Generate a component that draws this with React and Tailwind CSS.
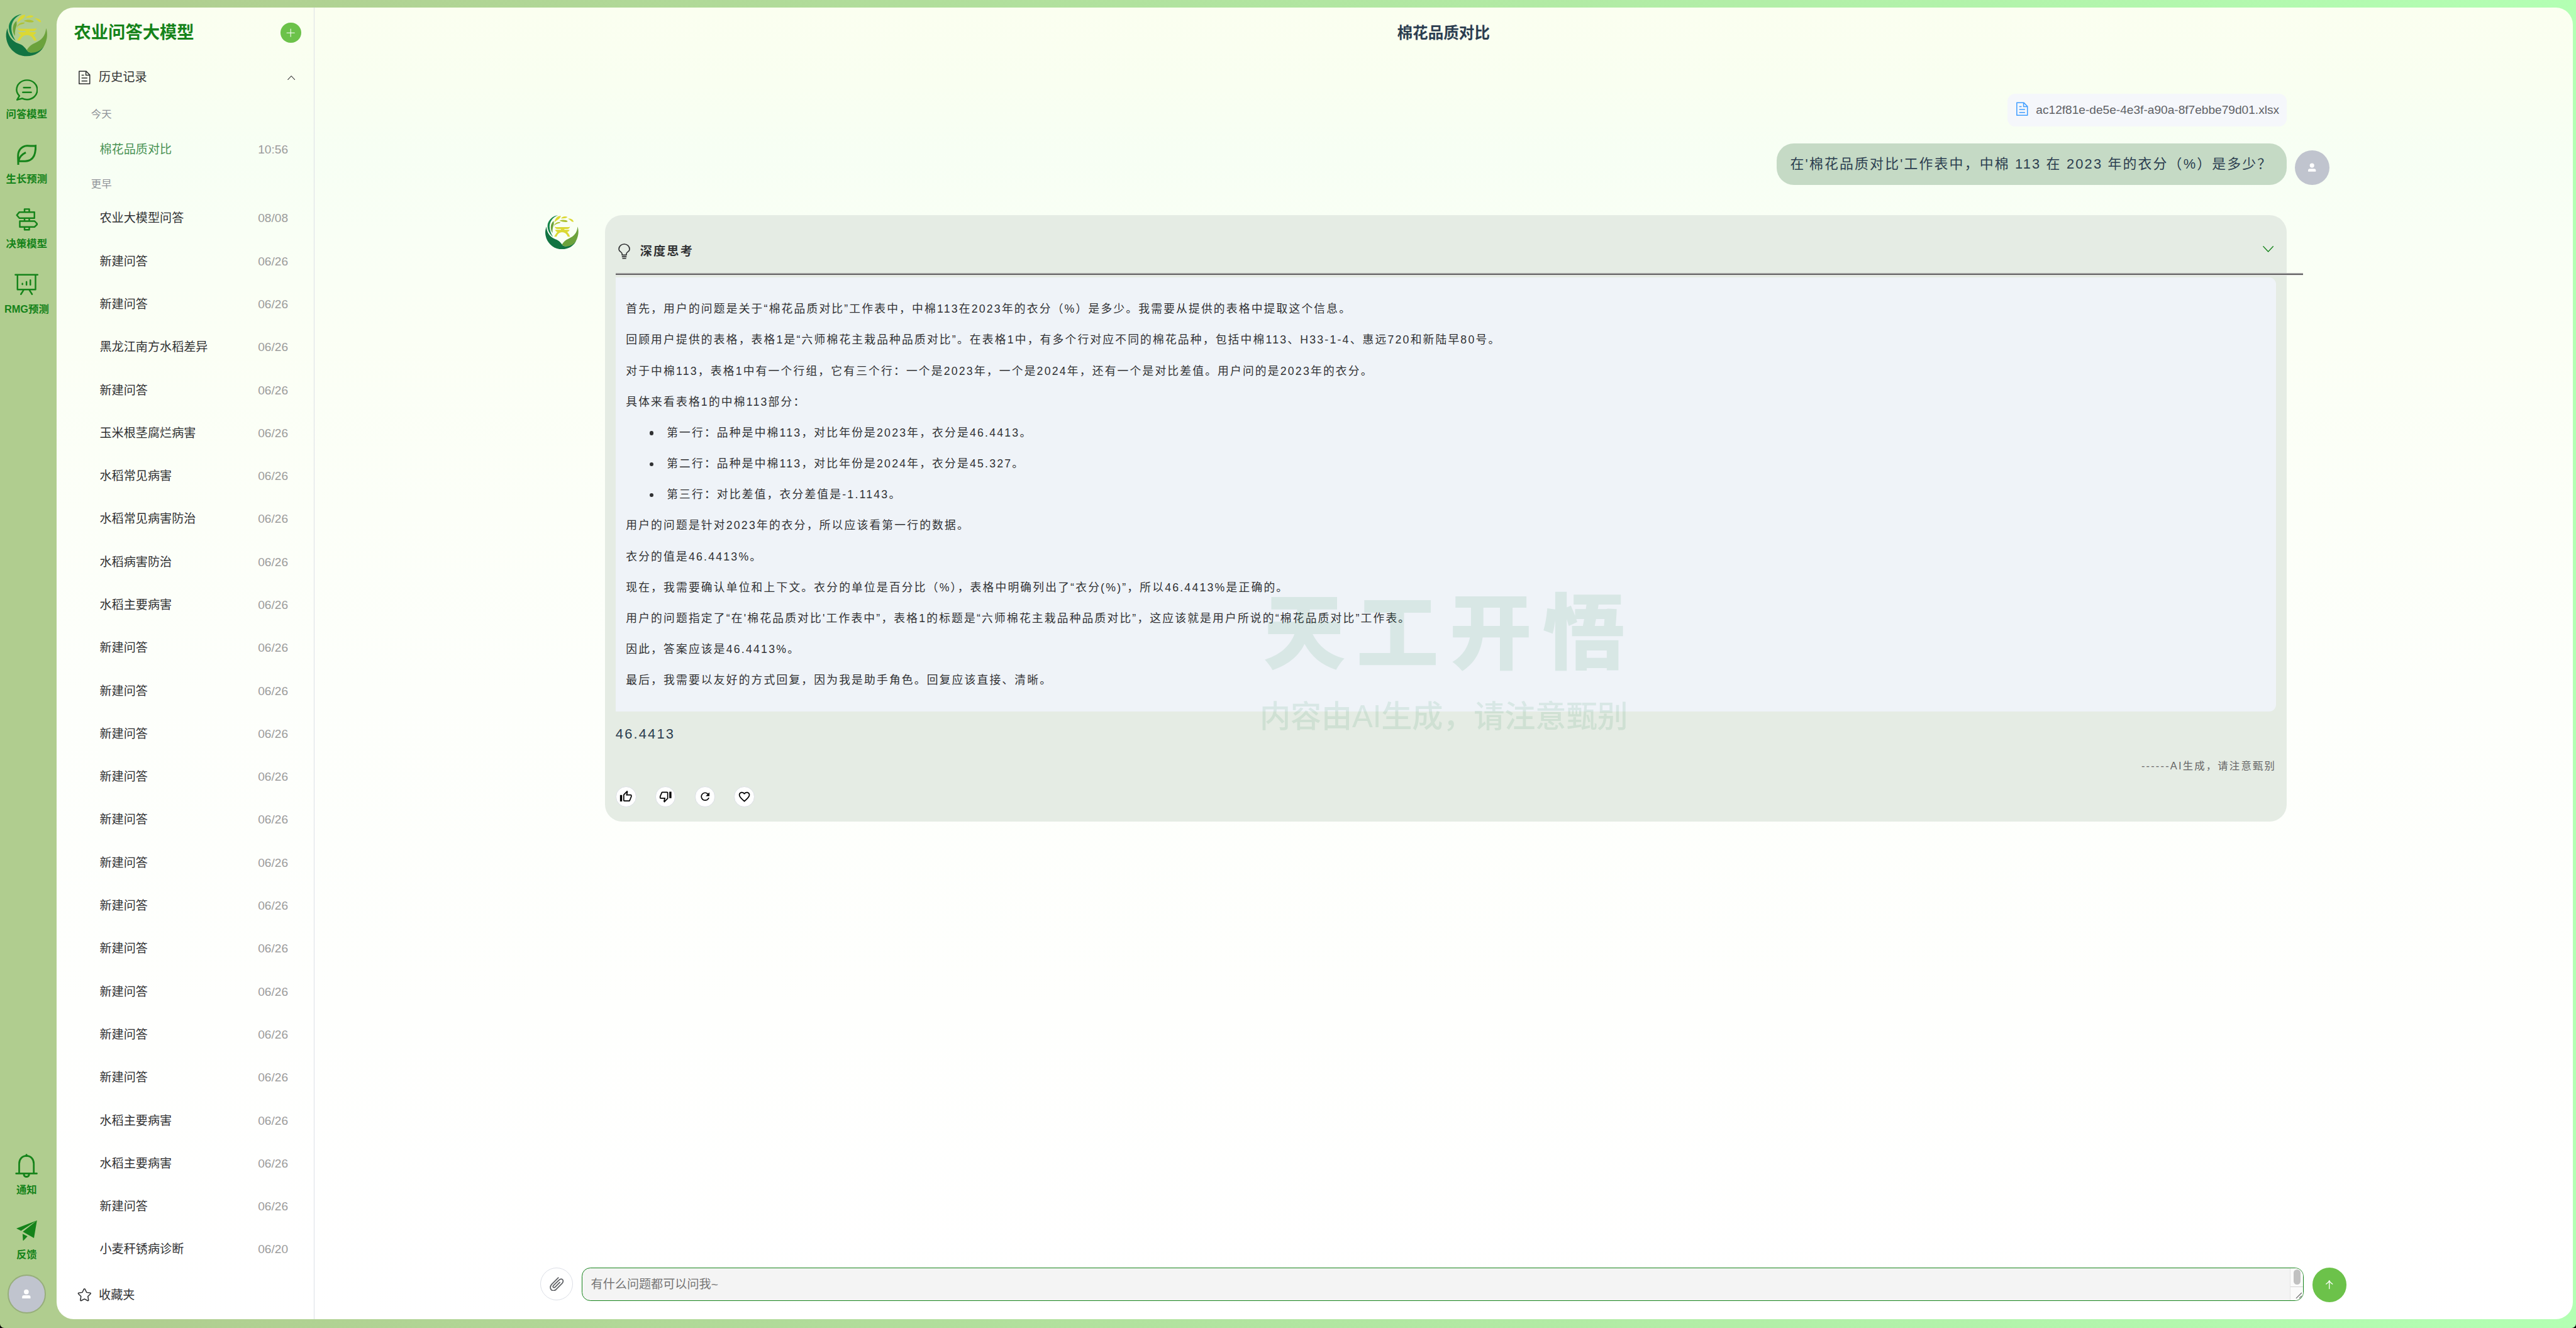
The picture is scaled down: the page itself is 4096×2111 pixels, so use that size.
import React from "react";
import { MdOutlineThumbUp, MdOutlineThumbDown, MdRefresh, MdFavoriteBorder } from "react-icons/md";

const DOC = "M832 384H576V128H192v768h640zm-26.496-64L640 154.496V320zM160 64h480l256 256v608a32 32 0 0 1-32 32H160a32 32 0 0 1-32-32V96a32 32 0 0 1 32-32m160 448h384v64H320zm0-192h160v64H320zm0 384h384v64H320z";
const PLUS = "M480 480V128a32 32 0 0 1 64 0v352h352a32 32 0 1 1 0 64H544v352a32 32 0 1 1-64 0V544H128a32 32 0 0 1 0-64z";
const CHEVRON = "m488.832 344.32-339.84 356.672a32 32 0 0 0 0 44.16l.384.384a29.44 29.44 0 0 0 42.688 0l320-335.872 319.872 335.872a29.44 29.44 0 0 0 42.688 0l.384-.384a32 32 0 0 0 0-44.16L535.168 344.32a32 32 0 0 0-46.336 0";
const USER = "M288 320a224 224 0 1 0 448 0 224 224 0 1 0-448 0m544 608H160a32 32 0 0 1-32-32v-96a160 160 0 0 1 160-160h448a160 160 0 0 1 160 160v96a32 32 0 0 1-32 32z";
const STAR = "m512 747.84 228.16 119.936a6.4 6.4 0 0 0 9.28-6.72l-43.52-254.08 184.512-179.904a6.4 6.4 0 0 0-3.52-10.88l-255.104-37.12L517.76 147.904a6.4 6.4 0 0 0-11.52 0L392.192 379.072l-255.104 37.12a6.4 6.4 0 0 0-3.52 10.88L318.08 606.976l-43.584 254.08a6.4 6.4 0 0 0 9.28 6.72zM313.6 924.48a70.4 70.4 0 0 1-102.144-74.24l37.888-220.928L88.96 472.96A70.4 70.4 0 0 1 128 352.896l221.76-32.256 99.2-200.96a70.4 70.4 0 0 1 126.208 0l99.2 200.96 221.824 32.256a70.4 70.4 0 0 1 39.04 120.064L774.72 629.376l37.888 220.928a70.4 70.4 0 0 1-102.144 74.24L512 820.096l-198.4 104.32z";

function Glyph({ d, className }) {
  return (
    <svg viewBox="0 0 1024 1024" className={className} fill="currentColor">
      <path d={d} />
    </svg>
  );
}

function Logo({ className }) {
  return (
    <svg viewBox="40 96 292 298" className={className}>
      <path fill="#15854a" d="M152 99C112 99 62 140 62 190C62 230 84 264 110 284C92 258 80 226 80 196C80 148 112 112 152 99Z" />
      <path fill="#6ca23c" d="M116 147C98 158 88 186 91 212C93 230 99 242 106 250C102 222 110 196 117 174Z" />
      <path fill="#dbd834" d="M178 103C148 100 124 128 122 160C134 144 150 138 160 130C170 122 176 112 178 103Z" />
      <path fill="#dbd834" d="M179 124C194 104 220 104 236 113C224 126 200 124 179 124Z" />
      <path fill="#dbd834" d="M240 127C262 124 286 134 288 154C268 156 262 136 240 127Z" />
      <path fill="#aec136" d="M166 145C186 134 226 134 237 150C228 160 196 156 166 145Z" />
      <path fill="#aec136" d="M118 193C120 168 146 150 174 158C170 172 130 166 118 193Z" />
      <path fill="#dbd834" d="M124 195C130 200 140 200 150 200H232C242 200 252 200 257 195C255 208 246 216 232 216H208V223H232C240 223 250 226 253 222C251 234 244 241 232 242C242 252 252 266 257 283H238C228 258 212 244 188 244C166 244 150 258 140 283H120C128 268 138 252 148 242C138 241 130 234 128 222C132 226 142 223 150 223H178V216H150C136 216 126 208 124 195Z" />
      <path fill="#127442" d="M53 196C42 220 40 250 46 276C58 336 112 392 186 392C246 392 294 360 311 314C290 346 250 366 218 366C204 366 194 360 188 350C176 334 162 314 130 304C84 288 54 246 53 196Z" />
      <path fill="#6ca23c" d="M323 196C318 250 292 280 244 300C216 312 198 330 188 350C196 362 208 368 224 368C264 366 296 346 314 310C332 272 334 230 323 196Z" />
    </svg>
  );
}

const stroke = { fill: "none", stroke: "currentColor", strokeLinecap: "round", strokeLinejoin: "round" };

const ChatIcon = () => (
  <svg viewBox="0 0 52 50" className="h-[25px] w-[26px]" {...stroke} strokeWidth="3.6">
    <path d="M8.500 38.500C4.500 34.500 2 29.800 2 24.600C2 12 12.600 2 26.300 2S50.200 12 50.200 24.600S39.600 47.200 26.300 47.200C22 47.200 18.500 46.400 15 44.600L3.200 47.800L8.500 38.500Z" />
    <path d="M18.500 19.500H34M16.500 30.500H36" />
  </svg>
);
const LeafIcon = () => (
  <svg viewBox="0 0 46 48" className="h-6 w-[23px]" {...stroke} strokeWidth="4.400" strokeLinecap="butt" strokeLinejoin="miter">
    <path d="M3 48C3 40 2.500 34 2.500 26C2.500 12 12 3 23 2.500C31 2.200 36 4 43.500 2.500C43.500 10 43.500 17 40 25C36 34 29 38 19 38.500C13 38.800 8 38.500 3.500 38C5 30 12 22 20.500 18" />
  </svg>
);
const SignIcon = () => (
  <svg viewBox="0 0 52 52" className="h-[26px] w-[26px]" {...stroke} strokeWidth="3.600">
    <path d="M8.500 9H43.500V23H8.500L2.500 16ZM44 30H9.500V43.500H44L50.500 36.800ZM20.500 9V2H31.500V9M20.500 23V30M31.500 23V30M20.500 43.500V50H31.500V43.500" />
  </svg>
);
const BoardIcon = () => (
  <svg viewBox="0 0 56 50" className="h-[25px] w-7" {...stroke} strokeWidth="3.600">
    <path d="M2 2.500H54M7 2.500V37H49V2.500M21 38.500L15 48M35 38.500L41 48" />
    <path d="M18.500 23V25M28 19V26M37 15V26" />
  </svg>
);
const BellIcon = () => (
  <svg viewBox="0 0 53 56" className="h-7 w-[26.500px]" {...stroke} strokeWidth="4">
    <path d="M9.500 44V23C9.500 13 16 5 26.500 5S43.500 13 43.500 23V44M2.500 46H50.500" />
    <path strokeWidth="4.500" d="M20.500 47.500C20.500 51 23 53.500 26.500 53.500S32.500 51 32.500 47.500M26.500 5V2.500" />
  </svg>
);
const PlaneIcon = () => (
  <svg viewBox="0 0 48 48" className="h-6 w-6" fill="currentColor">
    <path d="M48 0L0 18.500L11 24ZM48 0L15 26.500L41 41ZM14.500 31L26 37L15.500 48Z" />
  </svg>
);

function NavItem({ icon, label }) {
  return (
    <div className="flex h-[75.500px] w-full flex-col items-center">
      <div className="flex h-7 items-center">{icon}</div>
      <div className="mt-[4.500px] h-5 text-xs leading-5 font-bold whitespace-nowrap">{label}</div>
    </div>
  );
}

function Rail() {
  return (
    <div className="flex w-[66px] shrink-0 flex-col items-start text-[#15831a]">
      <div className="flex h-full w-[62px] flex-col items-center">
        <Logo className="mt-4 h-[49.600px] w-[48.600px] shrink-0" />
        <div className="mt-[25px] w-full">
          <NavItem icon={<ChatIcon />} label="问答模型" />
          <NavItem icon={<LeafIcon />} label="生长预测" />
          <NavItem icon={<SignIcon />} label="决策模型" />
          <NavItem icon={<BoardIcon />} label="RMG预测" />
        </div>
        <div className="mt-auto w-full">
          <NavItem icon={<BellIcon />} label="通知" />
          <NavItem icon={<PlaneIcon />} label="反馈" />
        </div>
        <div className="mb-[17px] -mt-[10px] flex h-[45px] w-[45px] shrink-0 items-center justify-center rounded-full border-2 border-[#97ae7b] bg-[#c0c4ce] text-white">
          <Glyph d={USER} className="h-[13px] w-[13px]" />
        </div>
      </div>
    </div>
  );
}

const TODAY = [["棉花品质对比", "10:56"]];
const EARLIER = [
  ["农业大模型问答", "08/08"],
  ["新建问答", "06/26"],
  ["新建问答", "06/26"],
  ["黑龙江南方水稻差异", "06/26"],
  ["新建问答", "06/26"],
  ["玉米根茎腐烂病害", "06/26"],
  ["水稻常见病害", "06/26"],
  ["水稻常见病害防治", "06/26"],
  ["水稻病害防治", "06/26"],
  ["水稻主要病害", "06/26"],
  ["新建问答", "06/26"],
  ["新建问答", "06/26"],
  ["新建问答", "06/26"],
  ["新建问答", "06/26"],
  ["新建问答", "06/26"],
  ["新建问答", "06/26"],
  ["新建问答", "06/26"],
  ["新建问答", "06/26"],
  ["新建问答", "06/26"],
  ["新建问答", "06/26"],
  ["新建问答", "06/26"],
  ["水稻主要病害", "06/26"],
  ["水稻主要病害", "06/26"],
  ["新建问答", "06/26"],
  ["小麦秆锈病诊断", "06/20"],
];

function HistoryRow({ title, time, active }) {
  return (
    <div className="flex h-[50px] items-center justify-between pr-[30px] pl-[50px] text-sm">
      <span className={active ? "text-[#4a9355]" : "text-[#303133]"}>{title}</span>
      <span className="text-[#9c9c9c]">{time}</span>
    </div>
  );
}

function Sidebar() {
  return (
    <div className="flex w-[300px] shrink-0 flex-col border-r border-[#dcdfe6] text-[#303133]">
      <div className="flex h-[58px] items-center justify-between pr-[15px] pl-5">
        <h1 className="text-xl font-bold text-[#15831a]">农业问答大模型</h1>
        <button className="flex h-6 w-6 items-center justify-center rounded-full bg-[#6cc24a] text-white">
          <Glyph d={PLUS} className="h-3 w-3" />
        </button>
      </div>
      <div className="flex h-[46px] items-center pl-[23px] pr-5 text-sm">
        <Glyph d={DOC} className="h-[18px] w-[18px]" />
        <span className="ml-[8px]">历史记录</span>
        <Glyph d={CHEVRON} className="ml-auto h-3 w-3" />
      </div>
      <div className="mt-[1px] flex h-[39px] items-center pl-10 text-xs text-[#909399]">今天</div>
      {TODAY.map(([t, d], i) => (
        <div key={i} className="-mt-[4px]">
          <HistoryRow title={t} time={d} active />
        </div>
      ))}
      <div className="-mt-[4px] flex h-[39px] items-center pl-10 text-xs text-[#909399]">更早</div>
      <div className="-mt-[5px]">
        {EARLIER.map(([t, d], i) => (
          <HistoryRow key={i} title={t} time={d} />
        ))}
      </div>
      <div className="mt-auto mb-[7.500px] flex h-[42px] items-center pl-[23px] text-sm">
        <Glyph d={STAR} className="h-[18px] w-[18px]" />
        <span className="ml-[8px]">收藏夹</span>
      </div>
    </div>
  );
}

const THOUGHTS_A = [
  "首先，用户的问题是关于“棉花品质对比”工作表中，中棉113在2023年的衣分（%）是多少。我需要从提供的表格中提取这个信息。",
  "回顾用户提供的表格，表格1是“六师棉花主栽品种品质对比”。在表格1中，有多个行对应不同的棉花品种，包括中棉113、H33-1-4、惠远720和新陆早80号。",
  "对于中棉113，表格1中有一个行组，它有三个行：一个是2023年，一个是2024年，还有一个是对比差值。用户问的是2023年的衣分。",
  "具体来看表格1的中棉113部分：",
];
const BULLETS = [
  "第一行：品种是中棉113，对比年份是2023年，衣分是46.4413。",
  "第二行：品种是中棉113，对比年份是2024年，衣分是45.327。",
  "第三行：对比差值，衣分差值是-1.1143。",
];
const THOUGHTS_B = [
  "用户的问题是针对2023年的衣分，所以应该看第一行的数据。",
  "衣分的值是46.4413%。",
  "现在，我需要确认单位和上下文。衣分的单位是百分比（%），表格中明确列出了“衣分(%)”，所以46.4413%是正确的。",
  "用户的问题指定了“在'棉花品质对比'工作表中”，表格1的标题是“六师棉花主栽品种品质对比”，这应该就是用户所说的“棉花品质对比”工作表。",
  "因此，答案应该是46.4413%。",
  "最后，我需要以友好的方式回复，因为我是助手角色。回复应该直接、清晰。",
];

function ActionButton({ children }) {
  return (
    <button className="flex h-6 w-6 items-center justify-center rounded-full border border-[#dcdfe6] bg-white text-black">
      {children}
    </button>
  );
}

function UserMessage() {
  return (
    <div className="mr-[283px] flex flex-col">
      <div className="mr-[50px] flex h-[38px] w-[325px] items-start self-end rounded-[9px] bg-[#f5f7fb] pt-[8.500px] pl-[8.500px]">
        <Glyph d={DOC} className="h-[18px] w-[18px] shrink-0 text-[#409eff]" />
        <span className="ml-[7px] text-sm leading-[20px] whitespace-nowrap text-[#606266]">ac12f81e-de5e-4e3f-a90a-8f7ebbe79d01.xlsx</span>
      </div>
      <div className="mt-5 flex items-end justify-end gap-[10px]">
        <div className="flex h-12 w-[593.500px] items-center rounded-[20px] bg-[#c5dac5] pl-4 text-base tracking-[1.600px] whitespace-nowrap text-[#2c3e50]">
          在'棉花品质对比'工作表中，中棉 113 在 2023 年的衣分（%）是多少？
        </div>
        <div className="flex h-10 w-10 items-center justify-center rounded-full bg-[#c0c4ce] text-white">
          <Glyph d={USER} className="h-3 w-3" />
        </div>
      </div>
    </div>
  );
}

function AssistantMessage() {
  return (
    <div className="mt-[35px] ml-[268px] flex items-start">
      <Logo className="h-10 w-10 shrink-0" />
      <div className="ml-[30.500px] flex h-[706px] w-[1956.500px] flex-col rounded-[20px] bg-[#e5ece4] pl-3 tracking-[1.600px]">
        <div className="flex h-[68px] shrink-0 items-center pt-[17px] pr-[12.500px]">
          <svg viewBox="0 0 28 36" className="ml-[3px] h-[18px] w-[14px] text-[#303133]" {...stroke} strokeWidth="2.400" strokeLinecap="butt">
            <path d="M9 27V24C9 20 1.500 19 1.500 13.500C1.500 6.500 7 1.500 14 1.500S26.500 6.500 26.500 13.500C26.500 19 19 20 19 24V27Z" />
            <path d="M8.500 31H19.500M9.500 34.800H18.500" />
          </svg>
          <span className="ml-[11.500px] text-sm font-bold text-[#303133]">深度思考</span>
          <Glyph d={CHEVRON} className="-mt-[5px] ml-auto h-[17px] w-[17px] rotate-180 text-[#15831a]" />
        </div>
        <div className="flex h-[3px] w-[1964px] shrink-0 flex-col">
          <div className="h-px bg-[#9a9a9a]" />
          <div className="h-px bg-[#444444]" />
          <div className="h-px bg-[#eeeeee]" />
        </div>
        <div className="mt-[2px] h-[505px] w-[1932.500px] shrink-0 rounded-r-lg bg-[#eff3f8] pt-[19px] pl-3 text-[13px] leading-9 whitespace-nowrap text-[#303133]">
          {THOUGHTS_A.map((t, i) => <p key={i}>{t}</p>)}
          <ul>
            {BULLETS.map((t, i) => (
              <li key={i} className="flex items-center pl-[27.500px]">
                <span className="mr-[15.500px] h-[4.500px] w-[4.500px] rounded-full bg-[#303133]" />
                {t}
              </li>
            ))}
          </ul>
          {THOUGHTS_B.map((t, i) => <p key={i}>{t}</p>)}
        </div>
        <div className="mt-[14.500px] text-base leading-6 text-[#2c3e50]">46.4413</div>
        <div className="mt-[14.500px] pr-3 text-right text-xs leading-5 text-[#666666]">------AI生成，请注意甄别</div>
        <div className="mt-[14px] flex gap-[22px]">
          <ActionButton><MdOutlineThumbUp className="h-[15px] w-[15px]" /></ActionButton>
          <ActionButton><MdOutlineThumbDown className="h-[15px] w-[15px]" /></ActionButton>
          <ActionButton><MdRefresh className="h-[15px] w-[15px]" /></ActionButton>
          <ActionButton><MdFavoriteBorder className="h-[15.500px] w-[15.500px]" /></ActionButton>
        </div>
      </div>
    </div>
  );
}

function Composer() {
  return (
    <div className="mt-auto mb-5 ml-[263px] flex items-start">
      <button className="flex h-[38px] w-[38px] items-center justify-center rounded-full border border-[#dcdfe6] bg-white text-[#606266]">
        <svg viewBox="0 0 32 32" className="h-[16.500px] w-[16.500px]" {...stroke} strokeWidth="2.500">
          <path d="M19.500 1.500L4.500 16.500C0.500 21 1 26 3.500 28.500C6.500 31.500 11 31 14.500 28L28 14.500C31 11 31 7.500 29 5.800C26.500 3.500 23.500 4.500 21 7L9 18.500C6.500 21 7.500 22.500 8.300 23.300C9.300 24.300 11 24 12.500 22.500L23 12" />
        </svg>
      </button>
      <div className="ml-[10px] flex h-[38.500px] w-[2004px] items-center justify-between overflow-hidden rounded-[10px] border border-[#15831a] bg-[#f4f4f4] pl-[10px]">
        <span className="text-sm text-[#757575]">有什么问题都可以问我~</span>
        <div className="flex h-full w-[15px] flex-col border-l border-[#e4e4e4] bg-[#fafafa]">
          <div className="flex h-[22px] items-start justify-center border-b border-[#d4d4d4] pt-px">
            <div className="h-[18px] w-2 rounded-full bg-[#c1c1c1]" />
          </div>
          <svg viewBox="0 0 15 15" className="h-[15px] w-[14px]" fill="none" stroke="#6e6e6e" strokeWidth="1">
            <path d="M7 13.500L14 6.500M11 13.500L14 10.500" />
          </svg>
        </div>
      </div>
      <button className="ml-[10px] flex h-10 w-10 items-center justify-center rounded-full bg-[#6cc24a] text-white">
        <svg viewBox="0 0 16 20" className="h-[10.500px] w-[8.400px]" {...stroke} strokeWidth="1.800">
          <path d="M8 19V1M1 8.500C4 7 6.500 4.500 8 1C9.500 4.500 12 7 15 8.500" />
        </svg>
      </button>
    </div>
  );
}

export default function App() {
  return (
    <div className="h-[2111px] w-[4096px] overflow-hidden bg-black font-['Liberation_Sans','Noto_Sans_CJK_SC',sans-serif]">
      <div className="flex h-[1545.100px] w-[2998px] overflow-hidden rounded-b-[5px] bg-[linear-gradient(90deg,#b0cd8f_0%,#b0cd8f_3%,#b3ffb3_100%)] [zoom:1.366244]">
        <Rail />
        <div className="mt-[9px] flex h-[1526px] w-[2928px] rounded-[20px] bg-[linear-gradient(180deg,#fbfff0_0%,#f9fff1_6%,#f7fff4_11%,#f9fff5_17%,#fbfff5_25%,#fdfffb_52%,#ffffff_100%)]">
          <Sidebar />
          <div className="relative flex min-w-0 flex-1 flex-col">
            <div className="flex h-[60px] shrink-0 items-center justify-center text-lg font-bold text-[#2c3e50]">棉花品质对比</div>
            <div className="mt-10">
              <UserMessage />
              <AssistantMessage />
            </div>
            <Composer />
            <div className="pointer-events-none absolute top-[669px] left-[1100px] w-[424px] whitespace-nowrap text-[#15834a] opacity-10">
              <div className="pl-[4px] text-[96px] leading-[120px] font-black tracking-[12.500px]">天工开悟</div>
              <div className="mt-[11px] text-4xl leading-[50px] font-medium tracking-[-0.100px]">内容由AI生成，请注意甄别</div>
            </div>
          </div>
        </div>
      </div>
    </div>
  );
}
